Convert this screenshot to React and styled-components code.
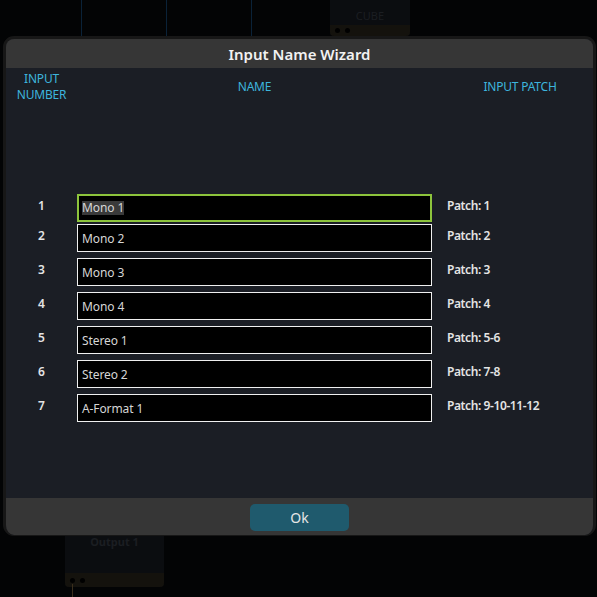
import React from "react";
import styled, { createGlobalStyle } from "styled-components";

const GlobalStyle = createGlobalStyle`
  html, body {
    margin: 0;
    padding: 0;
    background: #030405;
  }
  * {
    box-sizing: border-box;
  }
`;

const inputs = [
  { id: 1, name: "Mono 1", patch: "1", focused: true },
  { id: 2, name: "Mono 2", patch: "2" },
  { id: 3, name: "Mono 3", patch: "3" },
  { id: 4, name: "Mono 4", patch: "4" },
  { id: 5, name: "Stereo 1", patch: "5-6" },
  { id: 6, name: "Stereo 2", patch: "7-8" },
  { id: 7, name: "A-Format 1", patch: "9-10-11-12" },
];

const App = () => {
  return (
    <>
      <GlobalStyle />
      <Canvas>
        {/* node graph behind the dialog */}
        <Wire style={{ left: 81 }} />
        <Wire style={{ left: 166 }} />
        <Wire style={{ left: 251 }} />
        <Node style={{ left: 330, top: -10, width: 80, height: 46 }}>
          <NodeTitle $top={19}>CUBE</NodeTitle>
          <NodePorts $h={11}>
            <Port />
            <Port />
          </NodePorts>
        </Node>
        <Node style={{ left: 65, top: 526, width: 99, height: 61 }}>
          <NodeTitle $top={9} $bold>
            Output 1
          </NodeTitle>
          <NodePorts $h={14}>
            <Port />
            <Port />
          </NodePorts>
        </Node>
        <Cable />

        <Dialog>
          <TitleBar>Input Name Wizard</TitleBar>
          <Body>
            <Grid>
              <ColHead>
                INPUT
                <br />
                NUMBER
              </ColHead>
              <ColHead>NAME</ColHead>
              <ColHead $patch>INPUT PATCH</ColHead>
            </Grid>
            <Rows>
              {inputs.map((row) => (
                <Row key={row.id} $focused={row.focused}>
                  <Num>{row.id}</Num>
                  <Field $focused={row.focused}>
                    {row.focused ? <Selected>{row.name}</Selected> : row.name}
                  </Field>
                  <Patch>Patch: {row.patch}</Patch>
                </Row>
              ))}
            </Rows>
          </Body>
          <Footer>
            <OkButton>Ok</OkButton>
          </Footer>
        </Dialog>
      </Canvas>
    </>
  );
};

const Canvas = styled.div`
  position: relative;
  width: 597px;
  height: 597px;
  overflow: hidden;
  background: #030405;
  font-family: "Noto Sans", "Open Sans", sans-serif;
`;

const Wire = styled.div`
  position: absolute;
  top: 0;
  width: 1px;
  height: 40px;
  background: #0a2238;
`;

const Node = styled.div`
  position: absolute;
  display: flex;
  flex-direction: column;
  justify-content: space-between;
  background: #0b0d10;
  border-radius: 4px;
  overflow: hidden;
`;

const NodeTitle = styled.div`
  padding-top: ${({ $top }) => $top}px;
  text-align: center;
  font-size: 11px;
  line-height: 14px;
  font-weight: ${({ $bold }) => ($bold ? 700 : 400)};
  color: #1b1e22;
`;

const NodePorts = styled.div`
  display: flex;
  gap: 5px;
  align-items: center;
  height: ${({ $h }) => $h}px;
  padding-left: 5px;
  background: #14120d;
`;

const Port = styled.span`
  width: 5px;
  height: 5px;
  border-radius: 50%;
  background: #000;
`;

const Cable = styled.div`
  position: absolute;
  left: 72px;
  top: 584px;
  width: 1px;
  height: 14px;
  background: #3a2e1c;
`;

const Dialog = styled.div`
  position: absolute;
  left: 3px;
  top: 36px;
  width: 593px;
  height: 500px;
  display: flex;
  flex-direction: column;
  border: 3px solid #171717;
  border-bottom-width: 1px;
  border-radius: 11px;
  overflow: hidden;
  background: #1b1e25;
`;

const TitleBar = styled.div`
  height: 29px;
  flex-shrink: 0;
  display: flex;
  align-items: center;
  justify-content: center;
  background: #363636;
  color: #f2f2f2;
  font-size: 15px;
  font-weight: 600;
`;

const Body = styled.div`
  flex: 1;
  padding-top: 3px;
  background: #1b1e25;
`;

const Grid = styled.div`
  display: grid;
  grid-template-columns: 71px 355px 1fr;
  align-items: center;
`;

const ColHead = styled.div`
  text-align: center;
  padding-left: ${({ $patch }) => ($patch ? "15px" : "0")};
  font-size: 12px;
  line-height: 16px;
  letter-spacing: -0.2px;
  color: #3db5dd;
`;

const Rows = styled.div`
  display: flex;
  flex-direction: column;
  gap: 6px;
  margin-top: 91px;
`;

const Row = styled(Grid)`
  align-items: start;
  margin-bottom: ${({ $focused }) => ($focused ? "-4px" : "0")};
`;

const Num = styled.div`
  text-align: center;
  font-size: 12px;
  font-weight: 600;
  line-height: 24px;
  color: #e4e4e4;
`;

const Field = styled.div`
  height: 28px;
  display: flex;
  align-items: center;
  padding-left: ${({ $focused }) => ($focused ? "3px" : "4px")};
  background: #000;
  border: ${({ $focused }) => ($focused ? "2px solid #8dc43c" : "1px solid #f0f0f0")};
  color: #d6d6d6;
  font-size: 12px;
  letter-spacing: -0.1px;
`;

const Selected = styled.span`
  background: #3a3a3a;
  line-height: 14px;
`;

const Patch = styled.div`
  padding-left: 15px;
  font-size: 12px;
  font-weight: 600;
  line-height: 24px;
  letter-spacing: -0.4px;
  color: #e4e4e4;
`;

const Footer = styled.div`
  height: 37px;
  flex-shrink: 0;
  display: flex;
  justify-content: center;
  padding-top: 6px;
  background: #363636;
`;

const OkButton = styled.button`
  width: 99px;
  height: 27px;
  border: none;
  border-radius: 5px;
  background: #1f5a6d;
  color: #e6e6e6;
  font-family: inherit;
  font-size: 14px;
  cursor: pointer;
`;

export default App;
